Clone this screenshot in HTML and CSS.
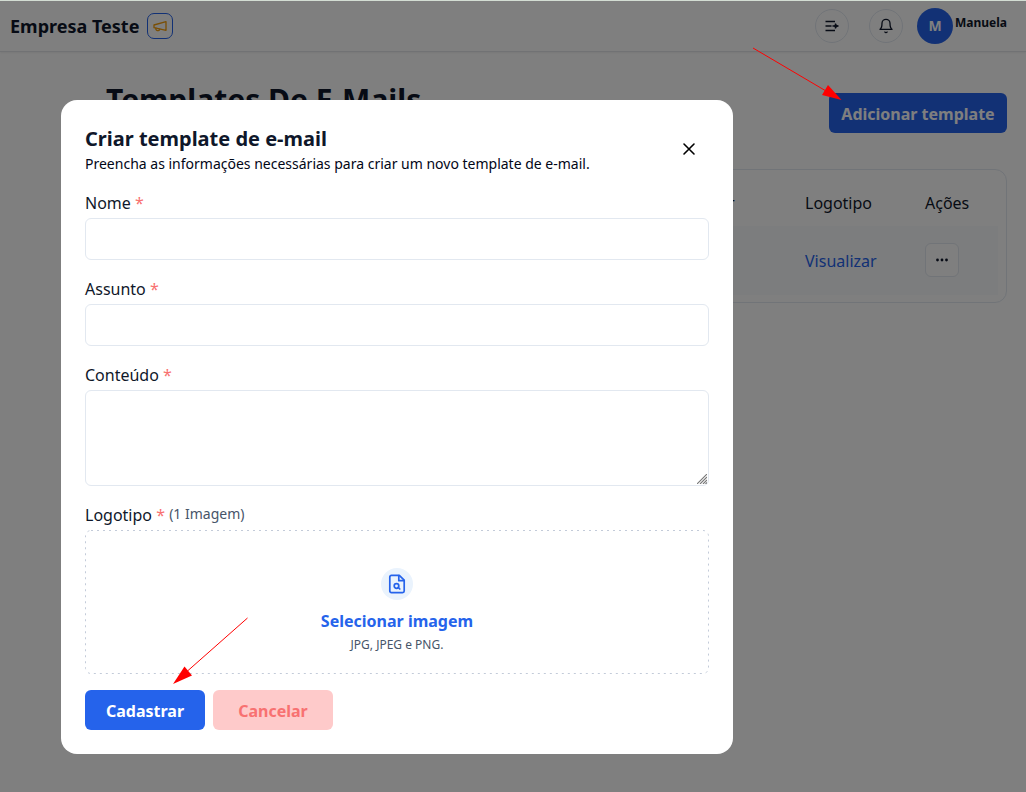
FILE: index.html
```html
<!DOCTYPE html>
<html lang="pt-BR">
<head>
<meta charset="utf-8">
<title>Templates De E-Mails</title>
<link rel="stylesheet" href="styles.css">
</head>
<body>
<header class="topbar">
  <span class="brand">Empresa Teste</span>
  <button class="announce" aria-label="Novidades">
    <svg width="16" height="16" viewBox="0 0 24 24" fill="none" stroke="currentColor" stroke-width="2" stroke-linecap="round" stroke-linejoin="round"><path d="m3 10.500 18-5v13L3 14.500z"/><path d="M11.6 16.8a3 3 0 1 1-5.8-1.6"/></svg>
  </button>
  <nav class="tools">
    <button class="round" aria-label="Menu">
      <svg width="16" height="16" viewBox="0 0 16 16" fill="none" stroke="currentColor" stroke-width="1.5"><path d="M1.500 3.500h9.500M1.500 8h6M1.500 12.500h9.500"/><path d="M8.500 8h6M11.500 5.500v5" stroke-width="1.400"/><path d="m11.500 5.800 2.800 2.200-2.800 2.200-1.500-2.200z" fill="currentColor" stroke="none"/></svg>
    </button>
    <button class="round" aria-label="Notificações">
      <svg width="16" height="16" viewBox="0 0 24 24" fill="none" stroke="currentColor" stroke-width="2" stroke-linecap="round" stroke-linejoin="round"><path d="M6 8a6 6 0 0 1 12 0c0 7 3 9 3 9H3s3-2 3-9"/><path d="M10.3 21a1.94 1.94 0 0 0 3.4 0"/></svg>
    </button>
    <div class="user"><span class="avatar">M</span><span class="username">Manuela</span></div>
  </nav>
</header>
<main class="content">
  <div class="heading">
    <h1>Templates De E-Mails</h1>
    <button class="btn add">Adicionar template</button>
  </div>
  <section class="table">
    <div class="row head"><span></span><span class="by">Criado por</span><span>Logotipo</span><span>Ações</span></div>
    <div class="row item"><span></span><span></span><a class="link">Visualizar</a>
      <button class="more" aria-label="Ações"><svg width="16" height="16" viewBox="0 0 16 16" fill="currentColor"><circle cx="3.5" cy="8" r="1.4"/><circle cx="8" cy="8" r="1.4"/><circle cx="12.5" cy="8" r="1.4"/></svg></button>
    </div>
  </section>
</main>
<div class="overlay"></div>
<form class="dialog">
  <div class="dialog-head">
    <div>
      <h2>Criar template de e-mail</h2>
      <p>Preencha as informações necessárias para criar um novo template de e-mail.</p>
    </div>
    <button type="button" class="close" aria-label="Fechar"><svg width="20" height="20" viewBox="0 0 20 20" fill="none" stroke="currentColor" stroke-width="1.6" stroke-linecap="round"><path d="m5 5 10 10M15 5 5 15"/></svg></button>
  </div>
  <div class="fields">
    <div class="field"><label>Nome <i>*</i></label><input type="text"></div>
    <div class="field"><label>Assunto <i>*</i></label><input type="text"></div>
    <div class="field"><label>Conteúdo <i>*</i></label>
      <div class="area"><textarea></textarea><svg class="grip" width="10" height="10" viewBox="0 0 10 10" stroke="#777" stroke-width="1.1"><path d="M0 10 10 0M3 10l7-7M6 10l4-4M8.500 10l1.500-1.500"/></svg></div>
    </div>
    <div class="field">
      <label>Logotipo <i>*</i> <small>(1 Imagem)</small></label>
      <div class="drop">
        <svg class="dash" width="624" height="144"><rect x=".5" y=".5" width="623" height="143" rx="5.5" fill="none" stroke="#c3cbd9" stroke-dasharray="2 4"/></svg>
        <span class="file"><svg width="20" height="20" viewBox="0 0 20 20" fill="none" stroke="currentColor" stroke-width="1.7" stroke-linejoin="round" stroke-linecap="round"><path d="M12.300 1.300H4.400a1.6 1.6 0 0 0-1.600 1.600v14.200a1.600 1.600 0 0 0 1.600 1.600h11.200a1.600 1.600 0 0 0 1.600-1.600V6.200z"/><path d="M11.800 1.500v5.200H17"/><circle cx="9.500" cy="12" r="2.300"/><path d="m11.300 13.500 1.500 1.500"/></svg></span>
        <strong>Selecionar imagem</strong>
        <span class="hint">JPG, JPEG e PNG.</span>
      </div>
    </div>
  </div>
  <div class="actions">
    <button type="button" class="btn save">Cadastrar</button>
    <button type="button" class="btn cancel">Cancelar</button>
  </div>
</form>
<svg class="arrows" width="1026" height="792" viewBox="0 0 1026 792" stroke="#f00" fill="#f00">
  <path d="M753 48 826 91"/><path d="m841.500 100-13.500-15-6 10z" stroke="none"/>
  <path d="m247.500 618-60 53"/><path d="m173 684 11.500-17.500 7.500 9z" stroke="none"/>
</svg>
</body>
</html>
```
FILE: styles.css
```css
* { box-sizing: border-box; }
body {
  margin: 0;
  height: 792px;
  overflow: hidden;
  border-top: 1px solid #d3ddd3;
  background: #fff;
  color: #0f172a;
  font: 16px/24px "Noto Sans", sans-serif;
}
button { padding: 0; border: 0; background: none; font: inherit; color: inherit; display: flex; align-items: center; justify-content: center; }
h1, h2, p { margin: 0; }

.topbar { display: flex; align-items: center; height: 51px; padding: 0 19px 0 10px; border-bottom: 1px solid #e2e4e8; box-shadow: 0 1px 2px #0001; }
.brand { width: 129px; font-size: 18px; font-weight: 700; line-height: 28px; white-space: nowrap; }
.announce { width: 26px; height: 26px; margin-left: 8px; border: 1px solid #2563eb; border-radius: 7px; color: #f59e0b; }
.tools { display: flex; align-items: center; gap: 20px; margin-left: auto; }
.round { width: 34px; height: 34px; border: 1px solid #e2e8f0; border-radius: 50%; }
.user { display: flex; gap: 2px; margin-left: -6px; }
.avatar { width: 36px; height: 36px; border-radius: 50%; background: #2563eb; color: #fff; font-size: 14px; font-weight: 700; line-height: 36px; text-align: center; }
.username { width: 52px; font-size: 12px; font-weight: 700; line-height: 30px; }

.content { padding: 29px 19px 0 106px; }
.heading { display: flex; align-items: flex-start; justify-content: space-between; height: 88px; }
h1 { font-size: 30px; font-weight: 700; line-height: 38px; }
.btn { height: 40px; padding-top: 2px; border-radius: 6px; font-weight: 700; }
.add { width: 178px; margin-top: 12px; background: #2563eb; color: #fff; }
.table { height: 134px; padding: 8px; border: 1px solid #e2e8f0; border-radius: 12px; }
.row { display: grid; grid-template-columns: 537px 153px 120px 1fr; align-items: center; }
.head { height: 48px; padding-top: 2px; }
.by { padding-left: 3px; }
.item { height: 69px; background: #f8fafc; }
.link { color: #2563eb; }
.more { width: 34px; height: 34px; margin-bottom: 2px; border: 1px solid #e2e8f0; border-radius: 6px; background: #fff; }

.overlay { position: fixed; inset: 1px 0 0; background: rgb(0 0 0 / 50%); }
.dialog { position: fixed; left: 61px; top: 100px; width: 672px; height: 654px; padding: 24px; border-radius: 16px; background: #fff; }
.dialog-head { display: flex; justify-content: space-between; height: 67px; }
h2 { font-size: 20px; font-weight: 700; line-height: 30px; }
.dialog-head p { color: #020617; font-size: 14px; line-height: 20px; }
.close { width: 40px; height: 40px; margin-top: 5px; color: #000; }
.fields { display: flex; flex-direction: column; gap: 17px; }
.field { display: flex; flex-direction: column; gap: 3px; }
label { height: 24px; white-space: nowrap; }
label i { color: #f87171; font-style: normal; }
label small { color: #475569; font-size: 14px; line-height: 20px; vertical-align: 2px; }
input, textarea { display: block; width: 624px; height: 42px; margin: 0; padding: 8px; border: 1px solid #e2e8f0; border-radius: 6px; background: #fff; }
.area { position: relative; }
textarea { height: 96px; resize: none; }
.grip { position: absolute; right: 2px; bottom: 2px; }
.drop { position: relative; display: flex; flex-direction: column; align-items: center; height: 144px; padding-top: 38px; }
.dash { position: absolute; inset: 0; }
.file { display: flex; align-items: center; justify-content: center; width: 32px; height: 32px; border-radius: 50%; background: #eaf3fd; color: #2563eb; }
.drop strong { margin-top: 9px; color: #2563eb; font-weight: 700; }
.hint { margin-top: 4px; color: #475569; font-size: 12px; line-height: 16px; }
.actions { display: flex; gap: 8px; margin-top: 16px; }
.actions .btn { width: 120px; }
.save { background: #2563eb; color: #fff; }
.cancel { background: #fecaca; color: #f87171; }
.arrows { position: fixed; left: 0; top: 0; pointer-events: none; }
```
